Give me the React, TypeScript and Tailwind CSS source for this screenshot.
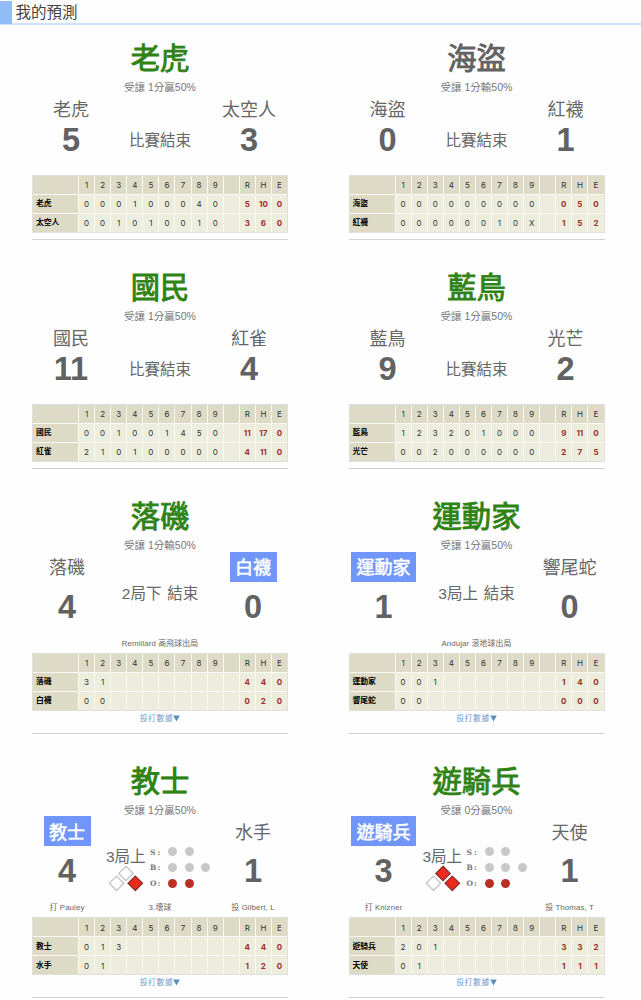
import React from "react";

type Live = { inning: string; bases: [boolean, boolean, boolean]; batter: string; play: string; pitcher: string };
type Game = {
  pick: string;
  won: boolean;
  odds: string;
  teams: [string, string];
  scores: [string, string];
  status?: string;
  note?: string;
  live?: Live;
  serving?: 0 | 1;
  lines: [string, string];
  totals: [string[], string[]];
};

const games: Game[] = [
  { pick: "老虎", won: true, odds: "受讓 1分贏50%", teams: ["老虎", "太空人"], scores: ["5", "3"], status: "比賽結束", lines: ["000100040", "001010010"], totals: [["5", "10", "0"], ["3", "6", "0"]] },
  { pick: "海盜", won: false, odds: "受讓 1分輸50%", teams: ["海盜", "紅襪"], scores: ["0", "1"], status: "比賽結束", lines: ["000000000", "00000010X"], totals: [["0", "5", "0"], ["1", "5", "2"]] },
  { pick: "國民", won: true, odds: "受讓 1分贏50%", teams: ["國民", "紅雀"], scores: ["11", "4"], status: "比賽結束", lines: ["001001450", "210100000"], totals: [["11", "17", "0"], ["4", "11", "0"]] },
  { pick: "藍鳥", won: true, odds: "受讓 1分贏50%", teams: ["藍鳥", "光芒"], scores: ["9", "2"], status: "比賽結束", lines: ["123201000", "002000000"], totals: [["9", "11", "0"], ["2", "7", "5"]] },
  { pick: "落磯", won: true, odds: "受讓 1分輸50%", teams: ["落磯", "白襪"], scores: ["4", "0"], status: "2局下 結束", note: "Remillard 高飛球出局", serving: 1, lines: ["31", "00"], totals: [["4", "4", "0"], ["0", "2", "0"]] },
  { pick: "運動家", won: true, odds: "受讓 1分贏50%", teams: ["運動家", "響尾蛇"], scores: ["1", "0"], status: "3局上 結束", note: "Andujar 滾地球出局", serving: 0, lines: ["001", "00"], totals: [["1", "4", "0"], ["0", "0", "0"]] },
  { pick: "教士", won: true, odds: "受讓 1分贏50%", teams: ["教士", "水手"], scores: ["4", "1"], live: { inning: "3局上", bases: [true, false, false], batter: "打 Pauley", play: "3.壞球", pitcher: "投 Gilbert, L" }, serving: 0, lines: ["013", "01"], totals: [["4", "4", "0"], ["1", "2", "0"]] },
  { pick: "遊騎兵", won: true, odds: "受讓 0分贏50%", teams: ["遊騎兵", "天使"], scores: ["3", "1"], live: { inning: "3局上", bases: [true, true, false], batter: "打 Knizner", play: "", pitcher: "投 Thomas, T" }, serving: 0, lines: ["201", "01"], totals: [["3", "3", "2"], ["1", "1", "1"]] },
];

const innings = [0, 1, 2, 3, 4, 5, 6, 7, 8];

function Cell({ children, tone }: { children?: React.ReactNode; tone: "head" | "run" | "total" }) {
  const tones = {
    head: "bg-[#dddbc6] text-[#333]",
    run: "bg-[#eceddd] text-[#333]",
    total: "bg-[#eceddd] font-bold text-[#a02c2a]",
  };
  return <div className={`flex items-center justify-center pt-px font-['Inter',sans-serif] ${tones[tone]}`}>{children}</div>;
}

function LineScore({ game }: { game: Game }) {
  return (
    <div className="grid h-[58px] w-full grid-cols-[45px_repeat(13,minmax(0,1fr))] grid-rows-3 gap-px border border-[#dfdfdb] bg-[#fafaf5] text-[8px] leading-none">
      <Cell tone="head" />
      {innings.map((i) => <Cell key={i} tone="head">{i + 1}</Cell>)}
      <Cell tone="head" />
      {["R", "H", "E"].map((h) => <Cell key={h} tone="head">{h}</Cell>)}
      {([0, 1] as const).map((t) => (
        <React.Fragment key={t}>
          <div className="flex items-center bg-[#dddbc6] pl-[3px] pt-px text-[7.8px] font-bold text-black">{game.teams[t]}</div>
          {innings.map((i) => <Cell key={i} tone="run">{game.lines[t][i]}</Cell>)}
          <Cell tone="run" />
          {game.totals[t].map((n, i) => <Cell key={i} tone="total">{n}</Cell>)}
        </React.Fragment>
      ))}
    </div>
  );
}

function TeamScore({ game, side, tall }: { game: Game; side: 0 | 1; tall: boolean }) {
  const active = game.serving === side;
  return (
    <div className="flex flex-col items-center whitespace-nowrap">
      <div className={`flex h-[30px] items-center pt-[3px] text-[18px] leading-none ${active ? "bg-[#7096fa] px-[5.5px] text-white [-webkit-text-stroke:0.5px_#fff]" : "text-[#666]"}`}>
        {game.teams[side]}
      </div>
      <div className={`text-[32.5px] font-bold leading-[36px] text-[#626262] ${tall ? "mt-[7px]" : "-mt-[2px]"}`}>{game.scores[side]}</div>
    </div>
  );
}

function Base({ cx, cy, on }: { cx: number; cy: number; on: boolean }) {
  return (
    <path
      d={`M${cx} ${cy - 7.2}L${cx + 7.2} ${cy}L${cx} ${cy + 7.2}L${cx - 7.2} ${cy}Z`}
      fill={on ? "#ee2a1c" : "#fff"}
      stroke={on ? "#8c302b" : "#c4c4c4"}
      strokeWidth="1.3"
    />
  );
}

function Lights({ label, count, on }: { label: string; count: number; on: boolean }) {
  return (
    <div className="flex h-[15.7px] items-center">
      <div className="flex w-[18px] pt-px font-['DejaVu_Serif',serif] text-[7.5px] font-bold leading-none text-[#777]">
        <span className="w-[7.5px]">{label}</span>
        <span>:</span>
      </div>
      <div className="flex gap-[7.5px]">
        {Array.from({ length: count }, (_, i) => (
          <div key={i} className={`size-[9px] rounded-full ${on ? "bg-[#b93024]" : "bg-[#c9c9c9]"}`} />
        ))}
      </div>
    </div>
  );
}

function LiveStatus({ live }: { live: Live }) {
  return (
    <div className="flex pl-[4px] pt-[28px]">
      <div className="flex w-[44px] flex-col whitespace-nowrap">
        <div className="pt-[2px] text-[15.5px] leading-[22px] text-[#666]">{live.inning}</div>
        <svg className="-mt-[3px] ml-[2px]" width="36" height="28" viewBox="0 0 36 28">
          <Base cx={18} cy={8.5} on={live.bases[1]} />
          <Base cx={8.5} cy={18.3} on={live.bases[2]} />
          <Base cx={27.3} cy={18.3} on={live.bases[0]} />
        </svg>
      </div>
      <div className="flex flex-col">
        <Lights label="S" count={2} on={false} />
        <Lights label="B" count={3} on={false} />
        <Lights label="O" count={2} on={true} />
      </div>
    </div>
  );
}

function Card({ game }: { game: Game }) {
  const tall = !!game.note || !!game.live;
  return (
    <section className="flex w-[256px] flex-col">
      <h2 className={`h-10 whitespace-nowrap text-center text-[29.3px] font-normal leading-10 [-webkit-text-stroke:0.9px_currentColor] ${game.won ? "text-[#2f8214]" : "text-[#626262]"}`}>{game.pick}</h2>
      <div className="h-[14.5px] whitespace-nowrap text-center text-[10.5px] leading-4 text-[#777]">{game.odds}</div>
      <div className={`grid ${tall ? "h-[83px] grid-cols-[70px_116px_70px]" : "h-[81px] grid-cols-[78px_100px_78px]"}`}>
        <TeamScore game={game} side={0} tall={tall} />
        {game.live ? (
          <LiveStatus live={game.live} />
        ) : (
          <div className={`whitespace-nowrap text-center text-[15.5px] leading-5 text-[#666] [word-spacing:1.5px] ${tall ? "pt-[32px]" : "pt-[37px]"}`}>{game.status}</div>
        )}
        <TeamScore game={game} side={1} tall={tall} />
      </div>
      {tall && (
        <div className="grid h-[18px] grid-cols-[70px_116px_70px] justify-items-center whitespace-nowrap text-[7.9px] leading-[17px] tracking-[0.1px] text-[#666]">
          {game.live ? (
            <>
              <span>{game.live.batter}</span>
              <span>{game.live.play}</span>
              <span>{game.live.pitcher}</span>
            </>
          ) : (
            <span className="col-start-2">{game.note}</span>
          )}
        </div>
      )}
      <LineScore game={game} />
      {tall && (
        <a className="flex h-[15px] items-center justify-center text-[7.9px] leading-[15px] tracking-[0.5px] text-[#6f9cc8]">
          投打數據
          <svg width="7" height="7" viewBox="0 0 7 7">
            <path d="M0.2 0.5H6.8L3.5 6.5Z" fill="#5b8db8" />
          </svg>
        </a>
      )}
      <div className={`h-px w-full bg-[#d2d2d2] ${tall ? "mt-[7px]" : "mt-[6px]"}`} />
    </section>
  );
}

export default function App() {
  return (
    <main className="h-[1000px] w-full overflow-hidden bg-[#fefefe] font-['Liberation_Sans','Noto_Sans_CJK_TC',sans-serif]">
      <header className="flex h-[25px] items-center border-b-2 border-[#cfe0fb] pt-px">
        <div className="h-[23px] w-3 bg-[#93bdf8]" />
        <h1 className="ml-[3.5px] pt-[2px] text-[15.5px] leading-none text-[#444]">我的預測</h1>
      </header>
      <div className="grid grid-cols-[256px_256px] grid-rows-[229px_229px_264.5px_264.5px] gap-x-[60.5px] pl-8 pt-[14px]">
        {games.map((g) => <Card key={g.pick} game={g} />)}
      </div>
    </main>
  );
}
